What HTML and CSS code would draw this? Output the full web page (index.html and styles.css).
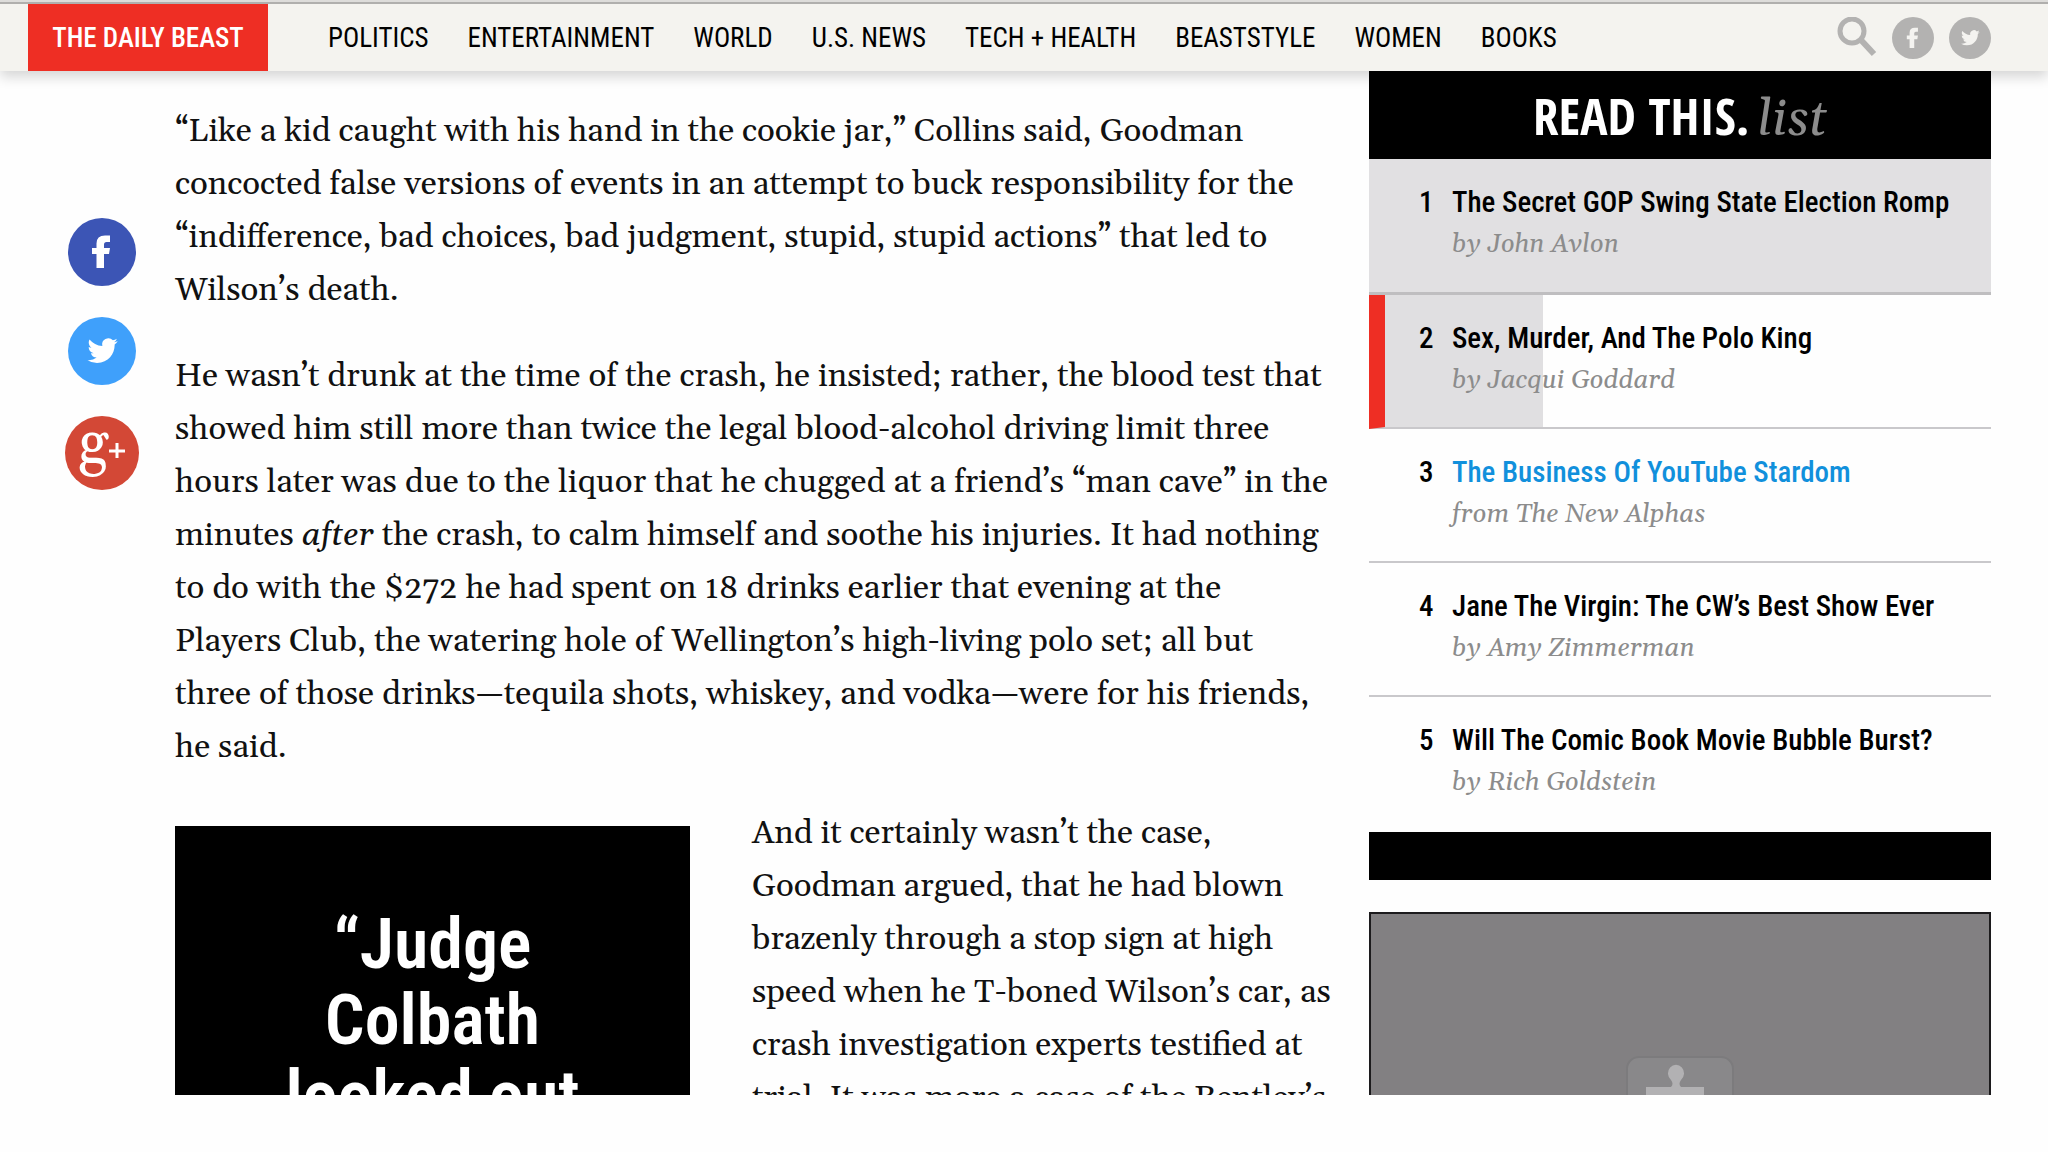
FILE: index.html
```html
<!DOCTYPE html>
<html lang="en">
<head>
<meta charset="utf-8">
<meta name="viewport" content="width=device-width, initial-scale=1">
<title>The Daily Beast</title>
<link rel="stylesheet" href="styles.css">
</head>
<body>
<header class="site-header">
  <a class="logo" href="#">THE DAILY BEAST</a>
  <nav class="sections" aria-label="Sections">
    <a href="#">POLITICS</a>
    <a href="#">ENTERTAINMENT</a>
    <a href="#">WORLD</a>
    <a href="#">U.S. NEWS</a>
    <a href="#">TECH + HEALTH</a>
    <a href="#">BEASTSTYLE</a>
    <a href="#">WOMEN</a>
    <a href="#">BOOKS</a>
  </nav>
  <div class="tools">
    <button class="icon-button" type="button" aria-label="Search">
      <svg width="40" height="42" viewBox="0 0 40 42" fill="none" stroke="#b3b2b1"><circle cx="15" cy="14" r="12" stroke-width="5"/><path d="M23.500 22.500L37 37" stroke-width="6"/></svg>
    </button>
    <a class="icon-link" href="#" aria-label="Facebook">
      <svg width="42" height="42" viewBox="0 0 68 68"><circle cx="34" cy="34" r="34" fill="#b3b2b1"/><path fill="#f4f3f0" d="M42 17.500V24h-3.500q-2.500 0-2.500 2.500V30h6l-1 6h-5v14h-7.500V36H24v-6h4.500v-4.500q0-8 8.500-8z"/></svg>
    </a>
    <a class="icon-link" href="#" aria-label="Twitter">
      <svg width="42" height="42" viewBox="0 0 68 68"><circle cx="34" cy="34" r="34" fill="#b3b2b1"/><use href="#bird" fill="#f4f3f0"/></svg>
    </a>
  </div>
</header>

<main class="page">
  <aside class="share" aria-label="Share">
    <a href="#" aria-label="Share on Facebook">
      <svg width="68" height="68" viewBox="0 0 68 68"><circle cx="34" cy="34" r="34" fill="#3c55b5"/><path fill="#fff" d="M42 17.500V24h-3.500q-2.500 0-2.500 2.500V30h6l-1 6h-5v14h-7.500V36H24v-6h4.500v-4.500q0-8 8.500-8z"/></svg>
    </a>
    <a href="#" aria-label="Share on Twitter">
      <svg width="68" height="68" viewBox="0 0 68 68"><defs><path id="bird" transform="translate(19.500 18.500) scale(1.260)" d="M23.953 4.570a10 10 0 01-2.825.775 4.958 4.958 0 002.163-2.723c-.951.555-2.005.959-3.127 1.184a4.920 4.920 0 00-8.384 4.482C7.690 8.095 4.067 6.130 1.640 3.162a4.822 4.822 0 00-.666 2.475c0 1.710.870 3.213 2.188 4.096a4.904 4.904 0 01-2.228-.616v.060a4.923 4.923 0 003.946 4.827 4.996 4.996 0 01-2.212.085 4.936 4.936 0 004.604 3.417 9.867 9.867 0 01-6.102 2.105c-.390 0-.779-.023-1.170-.067a13.995 13.995 0 007.557 2.209c9.053 0 13.998-7.496 13.998-13.985 0-.210 0-.420-.015-.630A9.935 9.935 0 0024 4.590z"/></defs><circle cx="34" cy="34" r="34" fill="#3fa0fb"/><use href="#bird" fill="#fff"/></svg>
    </a>
    <a href="#" aria-label="Share on Google Plus">
      <svg width="74" height="74" viewBox="0 0 74 74"><circle cx="37" cy="37" r="37" fill="#d34836"/><text class="gplus" x="13" y="46">g</text><path d="M44 35h16M52 27v15" stroke="#fff" stroke-width="3"/></svg>
    </a>
  </aside>

  <article class="story">
    <p>“Like a kid caught with his hand in the cookie jar,” Collins said, Goodman concocted false versions of events in an attempt to buck responsibility for the “indifference, bad choices, bad judgment, stupid, stupid actions” that led to Wilson’s death.</p>
    <p>He wasn’t drunk at the time of the crash, he insisted; rather, the blood test that showed him still more than twice the legal blood-alcohol driving limit three hours later was due to the liquor that he chugged at a friend’s “man cave” in the minutes <em>after</em> the crash, to calm himself and soothe his injuries. It had nothing to do with the $272 he had spent on 18 drinks earlier that evening at the Players Club, the watering hole of Wellington’s high-living polo set; all but three of those drinks—tequila shots, whiskey, and vodka—were for his friends, he said.</p>
    <div class="with-quote">
      <blockquote class="pull-quote">“Judge<br>Colbath<br>looked out</blockquote>
      <p>And it certainly wasn’t the case, Goodman argued, that he had blown brazenly through a stop sign at high speed when he T-boned Wilson’s car, as crash investigation experts testified at trial. It was more a case of the Bentley’s</p>
    </div>
  </article>

  <aside class="rail">
    <h2 class="rail-title"><span>READ THIS.</span> <em>list</em></h2>
    <ol class="reads">
      <li class="read"><span class="num">1</span><a href="#">The Secret GOP Swing State Election Romp</a><cite>by John Avlon</cite></li>
      <li class="read"><span class="num">2</span><a href="#">Sex, Murder, And The Polo King</a><cite>by Jacqui Goddard</cite></li>
      <li class="read"><span class="num">3</span><a class="sponsored" href="#">The Business Of YouTube Stardom</a><cite>from The New Alphas</cite></li>
      <li class="read"><span class="num">4</span><a href="#">Jane The Virgin: The CW’s Best Show Ever</a><cite>by Amy Zimmerman</cite></li>
      <li class="read"><span class="num">5</span><a href="#">Will The Comic Book Movie Bubble Burst?</a><cite>by Rich Goldstein</cite></li>
    </ol>
    <div class="rail-foot"></div>
    <div class="plugin">
      <svg width="108" height="108" viewBox="0 0 108 108"><rect x="1" y="1" width="106" height="106" rx="12" fill="#89888a" stroke="#7c7b7d" stroke-width="2"/><path fill="#b2b1b3" d="M20 31h25q3-3 0-7a8 8.500 0 1 1 10 0q-3 4 0 7h23v57H20z"/></svg>
    </div>
  </aside>
</main>
</body>
</html>
```
FILE: styles.css
```css
:root {
  --serif: Gelasio, Georgia, "Noto Serif", "Liberation Serif", serif;
  --sans: "Roboto Condensed", Roboto, "Liberation Sans", sans-serif;
  --red: #ee2e24;
  --gutter: 57px;
}

* { box-sizing: border-box; }

body {
  display: flex;
  flex-direction: column;
  height: 100vh;
  margin: 0;
  padding: 2px 0 var(--gutter);
  background: #fefefe;
  color: #111;
  font-family: var(--serif);
}

a { color: inherit; text-decoration: none; }
svg { display: block; }

.site-header {
  position: relative;
  z-index: 1;
  display: flex;
  flex: none;
  align-items: stretch;
  height: 69px;
  padding: 0 var(--gutter) 0 28px;
  border-top: 2px solid #b0afad;
  background: #f4f3ef;
  box-shadow: 0 -2px 0 #dddcda, 0 6px 12px rgba(0, 0, 0, 0.16);
  font-family: var(--sans);
  font-size: 27px;
}

.logo {
  display: flex;
  align-items: center;
  justify-content: center;
  width: 240px;
  background: var(--red);
  color: #fff;
  font-weight: 500;
}

.sections {
  display: flex;
  flex: 1;
  align-items: center;
  gap: 39px;
  padding-left: 60px;
  color: #000;
  white-space: nowrap;
}

.tools { display: flex; align-items: center; gap: 15px; }

.icon-button {
  padding: 0;
  border: 0;
  background: none;
  cursor: pointer;
}

.page {
  display: grid;
  flex: 1;
  grid-template-columns: 175px minmax(0, 1fr) 622px;
  min-height: 0;
  padding-right: var(--gutter);
  overflow: hidden;
}

.share {
  display: flex;
  flex-direction: column;
  align-items: center;
  gap: 31px;
  padding: 147px 0 0 28px;
}

.gplus { fill: #fff; font: 60px var(--serif); }

.story {
  padding: 34px 35px 0 0;
  font-size: 33px;
  font-variant-numeric: oldstyle-nums;
  line-height: 53px;
}

.story p { margin: 0 0 33px; }

.with-quote { display: flow-root; }

.pull-quote {
  float: left;
  width: 515px;
  min-height: 400px;
  margin: 19px 62px 0 0;
  padding: 80px 40px;
  background: #000;
  color: #fff;
  font-family: var(--sans);
  font-size: 70px;
  font-weight: 600;
  line-height: 76px;
  text-align: center;
}

.rail-title {
  display: flex;
  align-items: baseline;
  justify-content: center;
  gap: 8px;
  height: 88px;
  margin: 0;
  background: #000;
  color: #fff;
  font-family: "Open Sans Condensed", var(--sans);
  font-size: 51px;
  font-weight: 800;
  line-height: 88px;
}

.rail-title em {
  color: #8c8c8c;
  font-family: var(--serif);
  font-weight: 400;
}

.reads {
  margin: 0;
  padding: 0;
  list-style: none;
}

.read {
  display: grid;
  grid-template-columns: 33px 1fr;
  grid-template-rows: 46px 38px;
  height: 134px;
  padding: 21px 0 0 50px;
  border-bottom: 2px solid #c9c8cb;
  color: #000;
  font-family: var(--sans);
  font-size: 29px;
  font-weight: 500;
  line-height: 44px;
  white-space: nowrap;
}

.read:nth-child(1) {
  height: 136px;
  border-bottom: 3px solid #bfbec0;
  background: #e1e0e2;
}

.read:nth-child(2) {
  padding-left: 34px;
  border-left: 16px solid var(--red);
  background: linear-gradient(#e0dfe1, #e0dfe1) left / 158px 100% no-repeat;
}

.read:last-child { height: 135px; border-bottom: 0; }

.read cite {
  grid-column: 2;
  color: #8c8c8c;
  font-family: var(--serif);
  font-size: 26px;
  font-weight: 400;
  line-height: 38px;
}

.sponsored { color: #1190dc; }

.rail-foot { height: 48px; background: #000; }

.plugin {
  display: flex;
  justify-content: center;
  min-height: 400px;
  margin-top: 32px;
  padding-top: 142px;
  border: 2px solid #1c1b1d;
  background: #828082;
}
```
